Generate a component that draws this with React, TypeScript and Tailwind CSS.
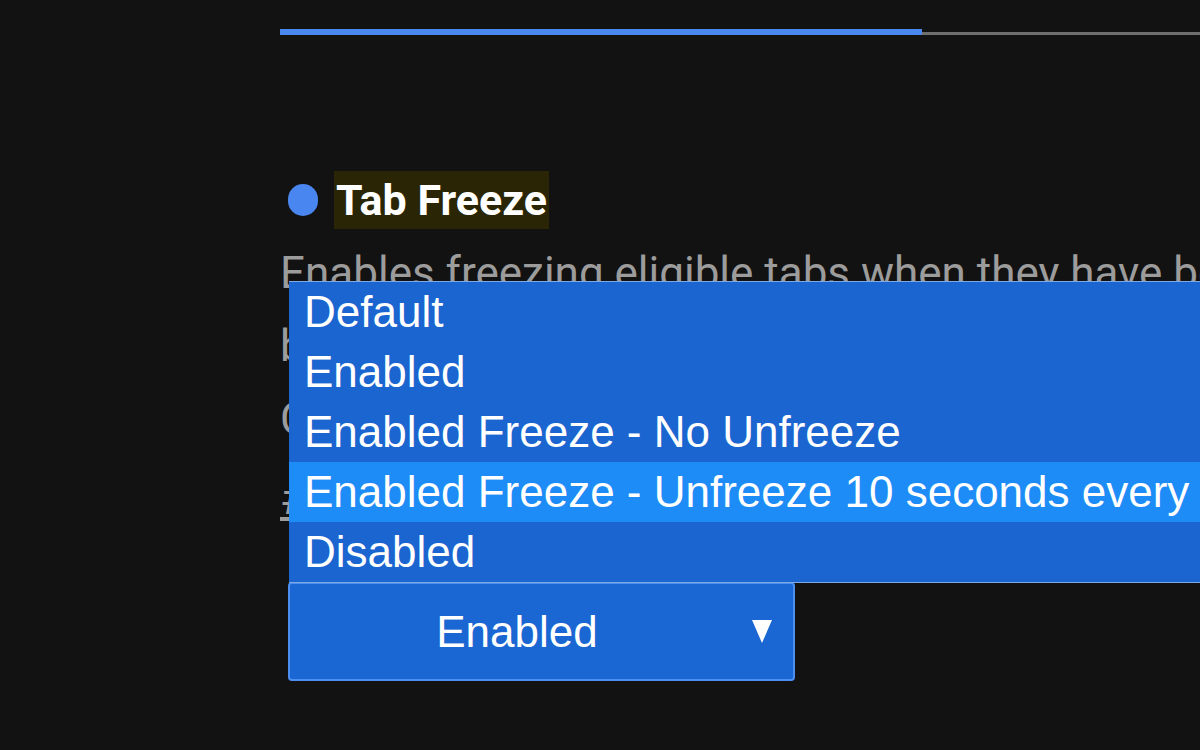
import React from 'react';

const options = [
  'Default',
  'Enabled',
  'Enabled Freeze - No Unfreeze',
  'Enabled Freeze - Unfreeze 10 seconds every 15 minutes',
  'Disabled',
];

function App() {
  const highlighted = 3;

  return (
    <div className="relative h-[750px] w-[1200px] overflow-hidden bg-[#121212] pl-[280px] pt-[29px]">
      {/* tab strip */}
      <div className="flex items-end">
        <div className="h-[6px] w-[642px] bg-[#4a87ee]" />
        <div className="h-[3px] flex-1 bg-[#6f6f6f]" />
      </div>

      {/* flag title */}
      <div className="mt-[136px] flex items-center">
        <span className="ml-[8px] h-[32px] w-[30px] rounded-full bg-[#4a86ef]" />
        <h2 className="ml-[16px] flex h-[58px] items-center bg-[#2a2605] px-[2px] font-['Roboto',sans-serif] text-[43px] font-bold leading-none text-white">
          Tab Freeze
        </h2>
      </div>

      {/* description */}
      <div className="mt-[8px] w-[1400px] font-['Roboto',sans-serif] text-[44px] leading-[73px] text-[#9c9c9c]">
        <p>Enables freezing eligible tabs when they have been</p>
        <p>backgrounded for 5 minutes. – Mac, Windows, Linux,</p>
        <p>Chrome OS, Android</p>
        <p className="mt-[7px] underline">#enable-tab-freeze</p>
      </div>

      {/* select */}
      <div className="absolute left-[288px] top-[582px] flex h-[99px] w-[507px] items-center rounded-[4px] border-2 border-[#4d8ff0] bg-[#1a66d2] font-['Liberation_Sans',Arial,sans-serif] text-[44px] text-white">
        <span className="flex-1 pr-[8px] text-center">Enabled</span>
        <svg className="mr-[21px]" width="20" height="23" viewBox="0 0 20 23">
          <path d="M0 0 H20 L10 23 Z" fill="white" />
        </svg>
      </div>

      {/* open option list */}
      <ul className="absolute left-[289px] top-[281px] w-[1000px] border-y border-[#7ea8e6] bg-[#1a65cf] font-['Liberation_Sans',Arial,sans-serif] text-[44px] text-white">
        {options.map((opt, i) => (
          <li
            key={opt}
            className={
              i === highlighted
                ? 'flex h-[60px] items-center whitespace-nowrap bg-[#1e8cf6] pl-[15px]'
                : 'flex h-[60px] items-center whitespace-nowrap pl-[15px]'
            }
          >
            {opt}
          </li>
        ))}
      </ul>
    </div>
  );
}

export default App;
